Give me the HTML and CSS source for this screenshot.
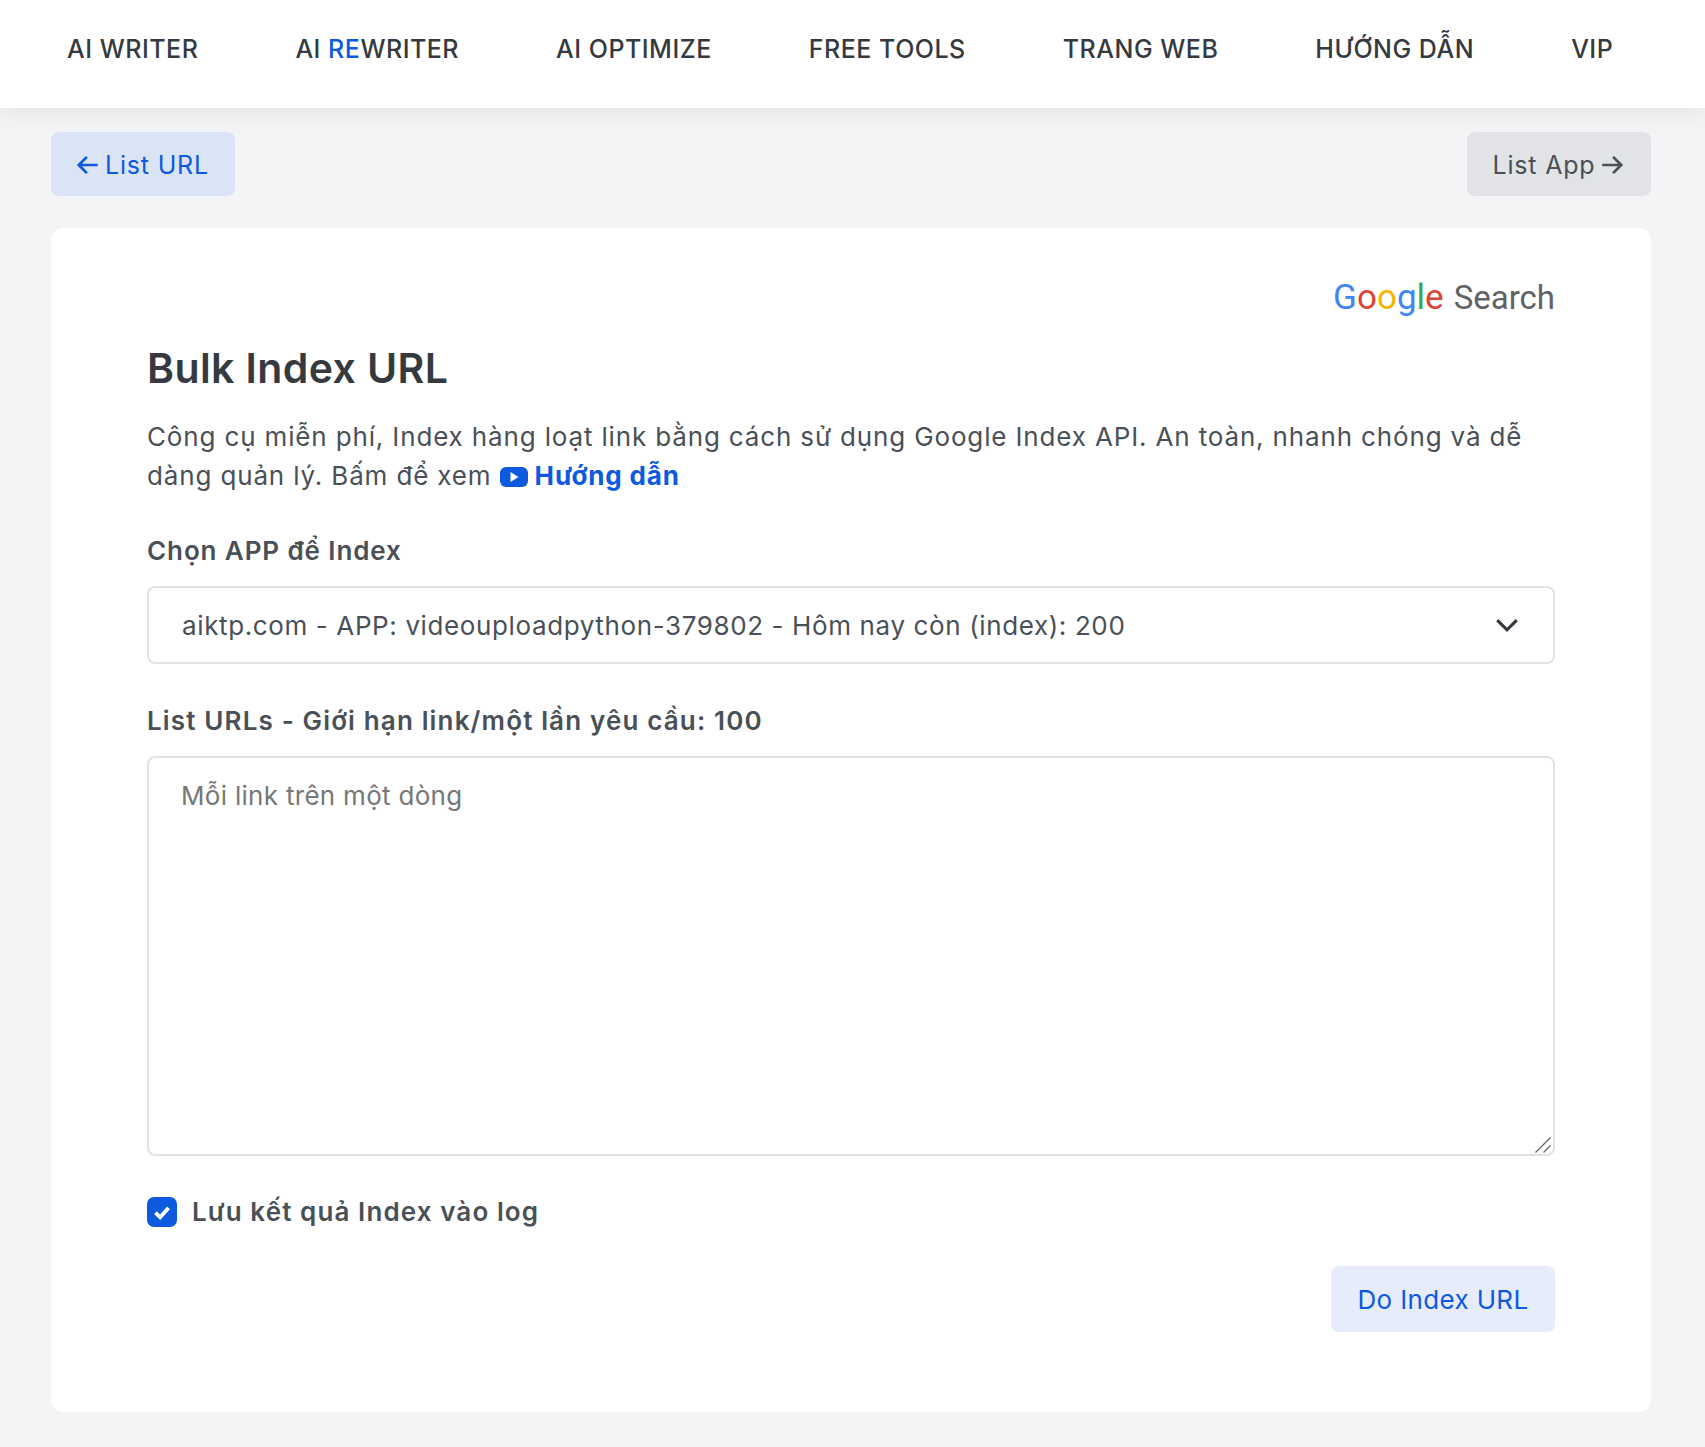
FILE: index.html
```html
<!DOCTYPE html>
<html lang="vi">
<head>
    <meta charset="UTF-8">
    <meta name="viewport" content="width=device-width, initial-scale=1.0">
    <title>Bulk Index URL</title>
    <link rel="stylesheet" href="styles.css">
</head>
<body>
    <div class="header">
        <a class="nav-item">AI WRITER</a>
        <a class="nav-item">AI <span class="blue">RE</span>WRITER</a>
        <a class="nav-item">AI OPTIMIZE</a>
        <a class="nav-item">FREE TOOLS</a>
        <a class="nav-item">TRANG WEB</a>
        <a class="nav-item">HƯỚNG DẪN</a>
        <a class="nav-item">VIP</a>
    </div>

    <div class="container">
        <div class="top-buttons">
            <a class="btn btn-back">
                <svg class="arrow" viewBox="0 0 24 24"><path d="M21 12H3.500M11 4.500 3.500 12l7.500 7.500"/></svg>
                List URL
            </a>
            <a class="btn btn-next">
                List App
                <svg class="arrow" viewBox="0 0 24 24"><path d="M3 12h17.500M13 4.500l7.500 7.500-7.500 7.500"/></svg>
            </a>
        </div>

        <div class="card">
            <div class="google-logo">
                <span class="g-word"><span class="g-blue">G</span><span class="g-red">o</span><span class="g-yellow">o</span><span class="g-blue">g</span><span class="g-green">l</span><span class="g-red">e</span></span>
                <span class="g-search">Search</span>
            </div>
            <h1 class="title">Bulk Index URL</h1>
            <p class="desc">
                Công cụ miễn phí, Index hàng loạt link bằng cách sử dụng Google Index API. An toàn, nhanh chóng và dễ dàng quản lý. Bấm để xem
                <a class="guide">
                    <svg class="yt-icon" viewBox="0 0 28 20"><rect width="28" height="20" rx="6"/><path d="M10.500 5v10l8-5z"/></svg>
                    Hướng dẫn
                </a>
            </p>

            <label class="field-label field-label-app">Chọn APP để Index</label>
            <div class="select-wrap">
                <select class="select">
                    <option>aiktp.com - APP: videouploadpython-379802 - Hôm nay còn (index): 200</option>
                </select>
                <svg class="chevron" viewBox="0 0 24 24"><path d="m3 7.500 9 9 9-9"/></svg>
            </div>

            <label class="field-label">List URLs - Giới hạn link/một lần yêu cầu: 100</label>
            <div class="textarea-wrap">
                <textarea class="textarea" placeholder="Mỗi link trên một dòng"></textarea>
                <svg class="grip" viewBox="0 0 16 16"><path d="M0.500 15.500 15.500 0.500M8.500 15.500l7-7"/></svg>
            </div>

            <label class="check-row">
                <span class="checkbox">
                    <svg viewBox="0 0 16 16"><path d="m4.500 8.300 2.500 2.500 4.500-5"/></svg>
                </span>
                Lưu kết quả Index vào log
            </label>

            <div class="actions">
                <button class="btn-submit">Do Index URL</button>
            </div>
        </div>
    </div>
</body>
</html>
```

FILE: styles.css
```css
* {
    box-sizing: border-box;
}

body {
    margin: 0;
    background-color: #f3f4f6;
    color: #495057;
    font-family: 'Inter', 'Noto Sans', sans-serif;
    font-size: 26px;
}

.blue {
    color: #0d5adf;
}

.header {
    display: flex;
    align-items: center;
    gap: 97px;
    height: 108px;
    padding-left: 67px;
    padding-bottom: 10px;
    background-color: #ffffff;
    box-shadow: 0 4px 24px rgba(0, 0, 0, 0.07);
    position: relative;
    font-size: 25px;
    font-weight: 500;
    color: #343a40;
    letter-spacing: 0.5px;
}

.container {
    padding: 24px 54px 34px 51px;
}

.top-buttons {
    display: flex;
    justify-content: space-between;
    margin-bottom: 32px;
}

.btn {
    display: flex;
    align-items: center;
    justify-content: center;
    gap: 4px;
    width: 184px;
    height: 64px;
    padding-top: 1px;
    border-radius: 8px;
    font-size: 25px;
    letter-spacing: 0.8px;
}

.btn-back {
    padding-right: 2px;
    background-color: #dae4f4;
    color: #0d5adf;
}

.btn-next {
    background-color: #e1e3e6;
    color: #495057;
}

.arrow {
    width: 26px;
    height: 26px;
    fill: none;
    stroke: currentColor;
    stroke-width: 2.500;
}

.card {
    background-color: #ffffff;
    border-radius: 12px;
    padding: 50px 96px 80px;
}

.google-logo {
    display: flex;
    justify-content: flex-end;
    align-items: baseline;
    margin-top: -1px;
    font-family: 'Roboto', sans-serif;
    font-size: 33px;
    line-height: 42px;
}

.g-word {
    font-size: 35px;
}

.g-blue { color: #4285f4; }
.g-red { color: #db4437; }
.g-yellow { color: #f4b400; }
.g-green { color: #34a853; }

.g-search {
    margin-left: 10px;
    color: #5f6368;
}

.title {
    margin: 24px 0 0;
    font-size: 41px;
    line-height: 50px;
    font-weight: 600;
    color: #343a40;
    letter-spacing: 0.4px;
}

.desc {
    margin: 24px 0 0;
    line-height: 39px;
    letter-spacing: 0.85px;
}

.guide {
    color: #0d5adf;
    font-weight: 700;
}

.yt-icon {
    width: 28px;
    height: 20px;
    vertical-align: -2px;
    fill: #0d5adf;
}

.yt-icon path {
    fill: #ffffff;
}

.field-label {
    display: block;
    margin-top: 39px;
    font-weight: 600;
    line-height: 36px;
    letter-spacing: 1.15px;
}

.field-label-app {
    margin-top: 38px;
    letter-spacing: 0.9px;
}

.select-wrap {
    position: relative;
    margin-top: 17px;
}

.select {
    display: block;
    width: 100%;
    height: 78px;
    padding: 0 33px;
    appearance: none;
    background-color: #ffffff;
    border: 2px solid #e2e2e2;
    border-radius: 8px;
    color: #495057;
    font-family: inherit;
    font-size: 26px;
    letter-spacing: 0.62px;
}

.chevron {
    position: absolute;
    top: 26px;
    right: 35px;
    width: 26px;
    height: 26px;
    fill: none;
    stroke: #343a40;
    stroke-width: 2.800;
    pointer-events: none;
}

.textarea-wrap {
    position: relative;
    margin-top: 17px;
}

.textarea {
    display: block;
    width: 100%;
    height: 400px;
    padding: 18px 32px;
    border: 2px solid #e2e2e2;
    border-radius: 8px;
    color: #495057;
    font-family: inherit;
    font-size: 26px;
    line-height: 39px;
    letter-spacing: 0.3px;
    resize: none;
}

.textarea::placeholder {
    color: #777777;
}

.grip {
    position: absolute;
    right: 4px;
    bottom: 3px;
    width: 16px;
    height: 16px;
    fill: none;
    stroke: #666666;
    stroke-width: 1.300;
    pointer-events: none;
}

.check-row {
    display: flex;
    align-items: center;
    gap: 15px;
    margin-top: 41px;
    font-weight: 600;
    line-height: 30px;
    letter-spacing: 1.1px;
}

.checkbox {
    display: flex;
    width: 30px;
    height: 30px;
    border-radius: 7px;
    background-color: #0d5adf;
}

.checkbox svg {
    fill: none;
    stroke: #ffffff;
    stroke-width: 2;
}

.actions {
    display: flex;
    justify-content: flex-end;
    margin-top: 39px;
}

.btn-submit {
    width: 224px;
    height: 66px;
    border: 0;
    border-radius: 8px;
    background-color: #e7ecfb;
    color: #0d5adf;
    font-family: inherit;
    font-size: 26px;
    letter-spacing: 0.35px;
}
```
